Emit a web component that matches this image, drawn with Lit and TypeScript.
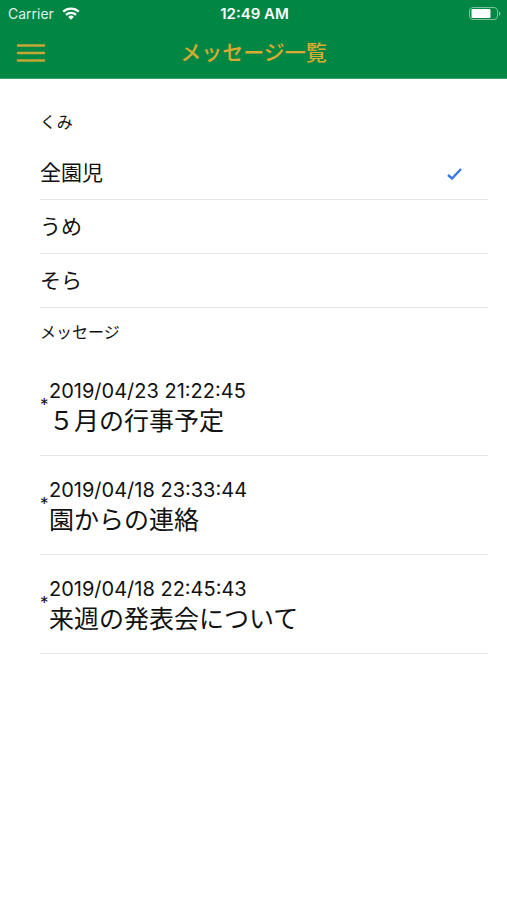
import { LitElement, html, css } from "lit";
import { customElement, state } from "lit/decorators.js";

interface Message {
  date: string;
  title: string;
}

@customElement("app-root")
export class AppRoot extends LitElement {
  static styles = css`
    :host {
      display: block;
      min-height: 100vh;
      background: #fff;
      color: #111;
      font-family: Inter, "Noto Sans CJK JP", sans-serif;
    }
    * {
      box-sizing: border-box;
    }
    header {
      background: #028644;
      border-bottom: 1px solid #3aa26c;
    }
    .status {
      display: grid;
      grid-template-columns: 1fr auto 1fr;
      align-items: center;
      height: 28px;
      padding: 0 6px 0 8px;
      color: #fff;
      font-size: 14px;
      line-height: 28px;
    }
    .carrier {
      display: flex;
      align-items: center;
      gap: 8px;
      color: #dff2e6;
    }
    .clock {
      font-size: 15px;
      font-weight: 600;
    }
    .battery {
      justify-self: end;
    }
    svg {
      display: block;
    }
    .bar {
      display: grid;
      grid-template-columns: 48px 1fr 48px;
      align-items: center;
      height: 50px;
      padding: 0 8px;
    }
    h1 {
      margin: 0;
      text-align: center;
      color: #d8ab30;
      font-size: 21px;
      line-height: 50px;
      font-weight: 500;
    }
    button {
      margin: 0;
      padding: 0;
      border: 0;
      background: none;
      color: inherit;
      font: inherit;
      text-align: left;
      cursor: pointer;
    }
    .menu {
      display: flex;
      align-items: center;
      height: 48px;
      padding-left: 8px;
    }
    main {
      display: flex;
      flex-direction: column;
      gap: 12px;
      padding: 31px 19px 20px 40px;
    }
    h2 {
      margin: 0;
      font-size: 16px;
      line-height: 24px;
      font-weight: 400;
    }
    .groups {
      min-width: 0;
      margin: 0;
      padding: 0;
      border: 0;
    }
    .group {
      display: flex;
      align-items: center;
      justify-content: space-between;
      height: 54px;
      padding-right: 25px;
      border-bottom: 1px solid #e6e6e6;
      font-size: 21px;
      cursor: pointer;
    }
    .group input {
      appearance: none;
      width: 0;
      height: 0;
      margin: 0;
    }
    .name {
      flex: 1;
      padding-bottom: 3px;
    }
    .messages {
      margin: 0;
      padding: 1px 0 0;
      list-style: none;
    }
    .message {
      display: flex;
      align-items: center;
      width: 100%;
      height: 99px;
      padding-bottom: 2px;
      border-bottom: 1px solid #e6e6e6;
    }
    .mark {
      width: 9px;
      font-size: 17px;
      line-height: 20px;
    }
    .date {
      display: block;
      font-size: 20px;
      line-height: 28px;
    }
    .title {
      display: block;
      font-family: "Noto Sans CJK JP", sans-serif;
      font-size: 25px;
      line-height: 28px;
    }
  `;

  @state() private selected = "全園児";

  private groups = ["全園児", "うめ", "そら"];

  private messages: Message[] = [
    { date: "2019/04/23 21:22:45", title: "５月の行事予定" },
    { date: "2019/04/18 23:33:44", title: "園からの連絡" },
    { date: "2019/04/18 22:45:43", title: "来週の発表会について" },
  ];

  private check() {
    return html`<svg width="17" height="14" viewBox="0 0 17 14" aria-hidden="true">
      <path d="M2 9l4 3.500L15 3" fill="none" stroke="#3b78e7" stroke-width="2.4" />
    </svg>`;
  }

  render() {
    return html`
      <header>
        <div class="status">
          <span class="carrier">
            Carrier
            <svg width="18" height="14" viewBox="0 0 18 14" aria-hidden="true">
              <g fill="none" stroke="#fff" stroke-width="2.3">
                <path d="M1.2 4.700a11.2 11.2 0 0 1 15.6 0" />
                <path d="M4 7.800a7.2 7.2 0 0 1 10 0" />
              </g>
              <path d="M6.2 9.900a4 4 0 0 1 5.6 0L9 12.700z" fill="#fff" />
            </svg>
          </span>
          <span class="clock">12:49 AM</span>
          <svg class="battery" width="32" height="14" viewBox="0 0 32 14" aria-hidden="true">
            <rect x="0.5" y="0.5" width="28" height="12" rx="3.5" fill="none" stroke="#7fc29f" />
            <rect x="2.5" y="2" width="19" height="9" rx="1" fill="#fff" />
            <path d="M30 4.500v4.400q1.500-.7 1.500-2.200t-1.500-2.200z" fill="#7fc29f" />
          </svg>
        </div>
        <div class="bar">
          <button class="menu" aria-label="メニュー">
            <svg width="30" height="20" viewBox="0 0 30 20" aria-hidden="true">
              <path
                d="M2 2.500h26M2 10h26M2 17.500h26"
                stroke="#c9a634"
                stroke-width="2.500"
                stroke-linecap="round"
              />
            </svg>
          </button>
          <h1>メッセージ一覧</h1>
        </div>
      </header>
      <main>
        <h2 id="groups-title">くみ</h2>
        <fieldset class="groups" aria-labelledby="groups-title">
          ${this.groups.map(
            (g) => html`<label class="group">
              <input
                type="radio"
                name="group"
                .checked=${this.selected === g}
                @change=${() => (this.selected = g)}
              />
              <span class="name">${g}</span>
              ${this.selected === g ? this.check() : ""}
            </label>`
          )}
        </fieldset>
        <h2>メッセージ</h2>
        <ul class="messages">
          ${this.messages.map(
            (m) => html`<li>
              <button class="message">
                <span class="mark">*</span>
                <span>
                  <span class="date">${m.date}</span>
                  <span class="title">${m.title}</span>
                </span>
              </button>
            </li>`
          )}
        </ul>
      </main>
    `;
  }
}
